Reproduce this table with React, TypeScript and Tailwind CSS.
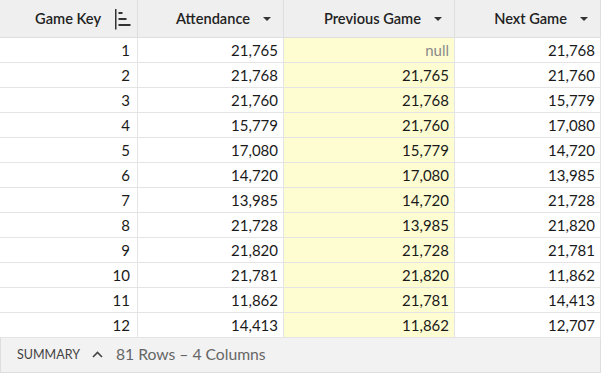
import { ReactNode } from "react";

const rows = [
  [1, "21,765", null, "21,768"],
  [2, "21,768", "21,765", "21,760"],
  [3, "21,760", "21,768", "15,779"],
  [4, "15,779", "21,760", "17,080"],
  [5, "17,080", "15,779", "14,720"],
  [6, "14,720", "17,080", "13,985"],
  [7, "13,985", "14,720", "21,728"],
  [8, "21,728", "13,985", "21,820"],
  [9, "21,820", "21,728", "21,781"],
  [10, "21,781", "21,820", "11,862"],
  [11, "11,862", "21,781", "14,413"],
  [12, "14,413", "11,862", "12,707"],
];

function Caret() {
  return (
    <svg width="8" height="4" viewBox="0 0 8 4" className="ml-[13px] mr-[12px] mt-[1px]">
      <path d="M0 0h8L4 4z" fill="#333" />
    </svg>
  );
}

function SortIcon() {
  return (
    <svg width="16" height="21" viewBox="0 0 16 21" className="ml-[14px] mr-[6px] mt-[1px]">
      <rect x="0" y="0" width="1.5" height="20.5" fill="#333" />
      <rect x="3.5" y="3" width="4" height="2" fill="#333" />
      <rect x="3.5" y="9" width="8" height="2" fill="#333" />
      <rect x="3.5" y="15" width="12" height="2" fill="#333" />
    </svg>
  );
}

function HeadCell({ w, children }: { w: string; children: ReactNode }) {
  return (
    <div
      className={`${w} h-full flex items-center justify-end border-r border-[#dedede] font-semibold text-[14.6px] text-[#222]`}
    >
      {children}
    </div>
  );
}

const widths = ["w-[138px]", "w-[146px]", "w-[171px]", "w-[146px]"];

export default function App() {
  return (
    <div
      className="w-[601px] h-[373px] bg-white flex flex-col overflow-hidden"
      style={{ fontFamily: "Lato, 'Liberation Sans', sans-serif" }}
    >
      <div className="flex h-[38px] bg-[#efefef] border-b border-[#dedede]">
        <HeadCell w={widths[0]}>
          <span>Game Key</span>
          <SortIcon />
        </HeadCell>
        <HeadCell w={widths[1]}>
          <span>Attendance</span>
          <Caret />
        </HeadCell>
        <HeadCell w={widths[2]}>
          <span>Previous Game</span>
          <Caret />
        </HeadCell>
        <HeadCell w={widths[3]}>
          <span>Next Game</span>
          <Caret />
        </HeadCell>
      </div>
      {rows.map((r) => (
        <div key={r[0]} className="flex h-[25px] border-b border-[#e4e4e4] text-[15px] text-[#1a1a1a]">
          <div className={`${widths[0]} flex items-center justify-end pr-[7px] border-r border-[#e4e4e4]`}>
            {r[0]}
          </div>
          <div className={`${widths[1]} flex items-center justify-end pr-[5px] border-r border-[#e4e4e4]`}>
            {r[1]}
          </div>
          <div
            className={`${widths[2]} flex items-center justify-end pr-[5px] border-r border-[#e4e4e4] bg-[#fefdd2]`}
          >
            {r[2] === null ? <span className="text-[#8a8a8a]">null</span> : r[2]}
          </div>
          <div className={`${widths[3]} flex items-center justify-end pr-[5px] border-r border-[#e4e4e4]`}>
            {r[3]}
          </div>
        </div>
      ))}
      <div className="flex items-center h-[35px] bg-[#f2f2f2] border border-t-0 border-[#dedede] pl-[16px]">
        <span className="text-[12.5px] text-[#444]">SUMMARY</span>
        <svg width="11" height="7" viewBox="0 0 11 7" className="ml-[12px] mt-[-2px]">
          <path d="M1 6L5.5 1.5L10 6" stroke="#444" strokeWidth="1.6" fill="none" />
        </svg>
        <span className="ml-[13px] text-[15.7px] text-[#666]">81 Rows – 4 Columns</span>
      </div>
    </div>
  );
}
